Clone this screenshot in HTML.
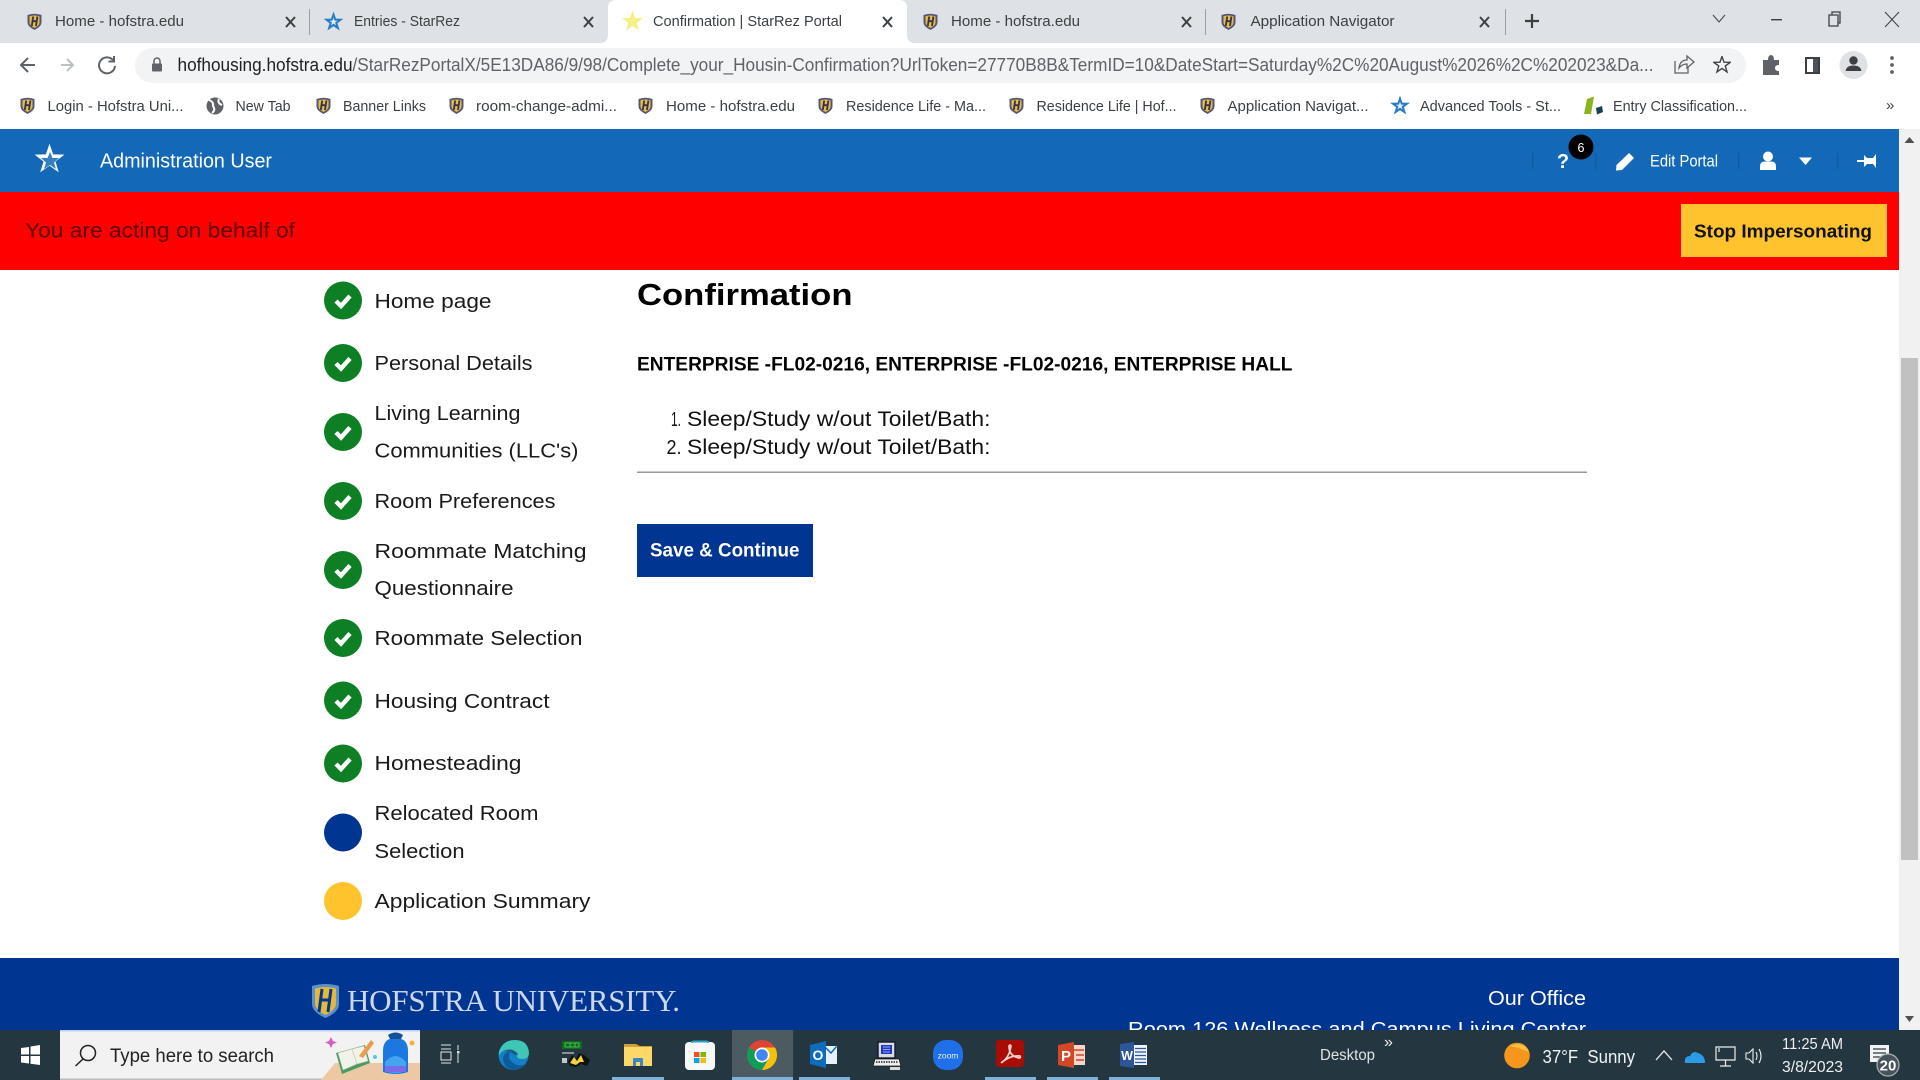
<!DOCTYPE html>
<html lang="en"><head><meta charset="utf-8"><title>Confirmation | StarRez Portal</title>
<style>
html,body{margin:0;padding:0;width:1920px;height:1080px;overflow:hidden;background:#fff}
svg{display:block;font-family:"Liberation Sans",Arial,sans-serif}
.t{font-size:15px;fill:#3c4043}
.b{font-size:14.5px;fill:#3c4043}
.n{font-size:20.5px;fill:#1a1a1a}
.ic{fill:none;stroke:#5f6368;stroke-width:2}
.x{fill:none;stroke:#3c4043;stroke-width:2}
.u{fill:#7fb2d8}
</style></head><body>
<svg width="1920" height="1080" viewBox="0 0 1920 1080" xmlns="http://www.w3.org/2000/svg">
<defs>
<symbol id="h" viewBox="0 0 15 17"><path d="M0.5 2 Q7.5 -0.6 14.5 2 V9.500 Q14.500 13.500 7.500 17 Q0.500 13.500 0.500 9.500Z" fill="#55557a"/><path d="M2.500 3.300 Q7.500 1.700 12.500 3.300 V9.500 Q12.500 12.500 7.500 15 Q2.500 12.500 2.500 9.500Z" fill="#e6bd3c"/><path d="M6.200 3.500 L4.800 13 M10.400 3.500 L9 13 M5.300 8.200 H9.800" stroke="#33305a" stroke-width="1.800" fill="none"/></symbol>
<symbol id="st" viewBox="-10.5 -10.5 21 21"><polygon points="0,-10 2.35,-3.24 9.51,-3.09 3.8,1.24 5.88,8.09 0,4 -5.88,8.09 -3.8,1.24 -9.51,-3.09 -2.35,-3.24"/></symbol>
<symbol id="st2" viewBox="-10.5 -10.5 21 21"><polygon points="0,-10 2.35,-3.24 9.51,-3.09 3.8,1.24 5.88,8.09 0,4 -5.88,8.09 -3.8,1.24 -9.51,-3.09 -2.35,-3.24" fill="#2b7cc0"/><polygon points="0,-4 1,-1.300 3.800,-1.200 1.500,0.500 2.400,3.200 0,1.600 -2.400,3.200 -1.500,0.500 -3.800,-1.200 -1,-1.300" fill="#dcecf8"/></symbol>
<symbol id="ck" viewBox="0 0 38 38"><circle cx="19" cy="19" r="19" fill="#0e7f25"/><path d="M12 19.500 L17 24.500 L26 14.500" fill="none" stroke="#fff" stroke-width="4.400"/></symbol>
</defs>

<!-- tab strip -->
<rect width="1920" height="43" fill="#dee1e6"/>
<path d="M600 43 Q608 43 608 35 V8 Q608 0 616 0 H899 Q907 0 907 8 V35 Q907 43 915 43Z" fill="#fff"/>
<rect y="43" width="1920" height="86" fill="#fff"/>
<use href="#h" x="27" y="13" width="15" height="17"/>
<text x="55" y="26" class="t" textLength="129" lengthAdjust="spacingAndGlyphs">Home - hofstra.edu</text>
<path class="x" d="M286 17 L295 27 M295 17 L286 27"/>
<rect x="309" y="9" width="1" height="26" fill="#9aa0a6"/>
<use href="#st2" x="322" y="11" width="23" height="22"/>
<text x="354" y="26" class="t" textLength="106" lengthAdjust="spacingAndGlyphs">Entries - StarRez</text>
<path class="x" d="M584 17 L593 27 M593 17 L584 27"/>
<use href="#st" x="621" y="10" width="23" height="23" fill="#f5ef85"/>
<text x="653" y="26" class="t" textLength="189" lengthAdjust="spacingAndGlyphs">Confirmation | StarRez Portal</text>
<path class="x" d="M883 17 L892 27 M892 17 L883 27"/>
<use href="#h" x="923" y="13" width="15" height="17"/>
<text x="951" y="26" class="t" textLength="129" lengthAdjust="spacingAndGlyphs">Home - hofstra.edu</text>
<path class="x" d="M1182 17 L1191 27 M1191 17 L1182 27"/>
<rect x="1205" y="9" width="1" height="26" fill="#9aa0a6"/>
<use href="#h" x="1221" y="13" width="15" height="17"/>
<text x="1250.500" y="26" class="t" textLength="144" lengthAdjust="spacingAndGlyphs">Application Navigator</text>
<path class="x" d="M1480 17 L1489 27 M1489 17 L1480 27"/>
<rect x="1505" y="9" width="1" height="26" fill="#9aa0a6"/>
<path d="M1532 14 V28 M1525 21 H1539" stroke="#3c4043" stroke-width="2.200" fill="none"/>
<path d="M1713 15 L1719 22 L1725 15" fill="none" stroke="#3c4043" stroke-width="1"/>
<rect x="1771" y="19" width="11" height="1.400" fill="#3c4043"/>
<path d="M1829 15 H1838 V26 H1829Z M1832 15 V12 H1840 V23 H1838" fill="none" stroke="#3c4043" stroke-width="1.300"/>
<path d="M1885 12 L1899 27 M1899 12 L1885 27" fill="none" stroke="#3c4043" stroke-width="1"/>

<!-- toolbar -->
<rect x="135" y="48" width="1611" height="35" rx="17.500" fill="#f1f3f4"/>
<path class="ic" d="M35 65 H21 M28 58 L21 65 L28 72"/>
<path d="M61 65 H73 M67 59 L73 65 L67 71" fill="none" stroke="#bcc0c4" stroke-width="2"/>
<path class="ic" d="M113 60 A8 8 0 1 0 115 66 M114 56 V61.500 H108.500"/>
<rect x="152" y="63.500" width="10" height="8" rx="1" fill="#5f6368"/><path d="M154 64 V61 A3 3 0 0 1 160 61 V64" fill="none" stroke="#5f6368" stroke-width="1.500"/>
<text x="177.500" y="71" font-size="18" fill="#5f6368" textLength="1476" lengthAdjust="spacingAndGlyphs"><tspan fill="#202124">hofhousing.hofstra.edu</tspan>/StarRezPortalX/5E13DA86/9/98/Complete_your_Housin-Confirmation?UrlToken=27770B8B&amp;TermID=10&amp;DateStart=Saturday%2C%20August%2026%2C%202023&amp;Da...</text>
<path d="M1675 61 V73 H1688 V67 M1679 68 Q1680 60 1687 60 V56 L1694 62 L1687 68 V64 Q1682 64 1679 68Z" fill="none" stroke="#5f6368" stroke-width="1.300"/>
<use href="#st" x="1713" y="56" width="18" height="18" fill="none" stroke="#3c4043" stroke-width="1.600"/>
<path d="M1763 60 H1768 Q1768 55 1771 55 Q1774 55 1774 60 H1779 V65 Q1775 65 1775 68 Q1775 71 1779 71 V75 H1763Z" fill="#5f6368"/>
<rect x="1806" y="58" width="13" height="15" fill="none" stroke="#3c4043" stroke-width="2"/><rect x="1813" y="58" width="6" height="15" fill="#3c4043" opacity=".9"/>
<circle cx="1853.500" cy="65" r="14" fill="#dfe1e5"/><circle cx="1853.500" cy="60.500" r="4.200" fill="#3c4043"/><path d="M1845.500 71 Q1846.500 65.500 1853.500 65.500 Q1860.500 65.500 1861.500 71Z" fill="#3c4043"/>
<circle cx="1892" cy="58" r="1.900" fill="#5f6368"/><circle cx="1892" cy="65" r="1.900" fill="#5f6368"/><circle cx="1892" cy="72" r="1.900" fill="#5f6368"/>

<!-- bookmarks -->
<use href="#h" x="20" y="97" width="15" height="17"/>
<text x="47.500" y="111" class="b" textLength="136" lengthAdjust="spacingAndGlyphs">Login - Hofstra Uni...</text>
<circle cx="215" cy="106" r="8.500" fill="#5f6368"/><path d="M209 100 Q214 102 213 106 Q216 110 212 113 M219 99 Q217 103 222 105" fill="none" stroke="#fff" stroke-width="2"/>
<text x="235.500" y="111" class="b" textLength="55" lengthAdjust="spacingAndGlyphs">New Tab</text>
<use href="#h" x="316" y="97" width="15" height="17"/>
<text x="343" y="111" class="b" textLength="83" lengthAdjust="spacingAndGlyphs">Banner Links</text>
<use href="#h" x="449" y="97" width="15" height="17"/>
<text x="476" y="111" class="b" textLength="141" lengthAdjust="spacingAndGlyphs">room-change-admi...</text>
<use href="#h" x="638" y="97" width="15" height="17"/>
<text x="666" y="111" class="b" textLength="129" lengthAdjust="spacingAndGlyphs">Home - hofstra.edu</text>
<use href="#h" x="818" y="97" width="15" height="17"/>
<text x="846" y="111" class="b" textLength="140" lengthAdjust="spacingAndGlyphs">Residence Life - Ma...</text>
<use href="#h" x="1009" y="97" width="15" height="17"/>
<text x="1036.500" y="111" class="b" textLength="140" lengthAdjust="spacingAndGlyphs">Residence Life | Hof...</text>
<use href="#h" x="1200" y="97" width="15" height="17"/>
<text x="1227.500" y="111" class="b" textLength="141" lengthAdjust="spacingAndGlyphs">Application Navigat...</text>
<use href="#st2" x="1389" y="95" width="22" height="22"/>
<text x="1420" y="111" class="b" textLength="141" lengthAdjust="spacingAndGlyphs">Advanced Tools - St...</text>
<path d="M1587 99 L1594 96.500 L1591 114 L1584 114Z" fill="#8ab41e"/><path d="M1596 108 L1602 106 L1603 112 L1597 114.500Z" fill="#17424f"/>
<text x="1613" y="111" class="b" textLength="134" lengthAdjust="spacingAndGlyphs">Entry Classification...</text>
<text x="1886" y="110" font-size="15" fill="#3c4043">»</text>

<!-- scrollbar -->
<rect x="1899" y="129" width="21" height="901" fill="#f1f1f1"/>
<path d="M1904.500 143 L1909.500 137 L1914.500 143Z" fill="#505050"/>
<rect x="1901" y="358" width="17" height="502" fill="#c1c1c1"/>
<path d="M1905 1016 L1909.500 1022 L1914 1016Z" fill="#505050"/>

<!-- portal header -->
<rect y="129" width="1899" height="63" fill="#1369b7"/>
<use href="#st" x="32" y="143" width="35" height="33" fill="#fff"/>
<polygon points="50,152 52.500,158 59,158 54,162.500 56,169 50,165 44,169 46,162.500 41,158 47.500,158" fill="#1369b7" opacity=".85"/>
<text x="100" y="167.500" font-size="20" fill="#fff" textLength="172" lengthAdjust="spacingAndGlyphs">Administration User</text>
<g fill="#0f5ba1"><rect x="1532" y="153" width="1.400" height="16"/><rect x="1595" y="153" width="1.400" height="16"/><rect x="1738" y="153" width="1.400" height="16"/><rect x="1837" y="153" width="1.400" height="16"/></g>
<text x="1563" y="168" font-size="20" font-weight="bold" fill="#fff" text-anchor="middle">?</text>
<circle cx="1581" cy="147" r="12.500" fill="#000"/>
<text x="1581" y="152" font-size="12.500" fill="#fff" text-anchor="middle">6</text>
<path d="M1629 153 L1634 158 L1622 170 L1616 170.500 L1616.500 165Z" fill="#fff"/>
<text x="1650" y="166.500" font-size="17" fill="#fff" textLength="68" lengthAdjust="spacingAndGlyphs">Edit Portal</text>
<circle cx="1768" cy="156.500" r="5" fill="#fff"/><path d="M1760 170 V166 Q1760 161.500 1765 161.500 H1771 Q1776 161.500 1776 166 V170Z" fill="#fff"/>
<path d="M1799 157.500 H1812 L1805.500 165Z" fill="#fff"/>
<rect x="1857" y="160" width="8" height="2" fill="#fff"/><path d="M1864 155 L1867 158 H1873 L1876 154 V168 L1873 164 H1867 L1864 167Z" fill="#fff"/>

<!-- red bar -->
<rect y="192" width="1899" height="78" fill="#f00"/>
<text x="25" y="237.500" font-size="21" fill="#5c0000" textLength="270" lengthAdjust="spacingAndGlyphs">You are acting on behalf of</text>
<rect x="1681" y="204" width="206" height="53" fill="#ffc32e"/>
<text x="1694" y="237.500" font-size="18" font-weight="bold" fill="#111" textLength="178" lengthAdjust="spacingAndGlyphs">Stop Impersonating</text>

<!-- sidebar -->
<use href="#ck" x="324" y="281.500" width="38" height="38"/>
<text x="374.500" y="308" class="n" textLength="117" lengthAdjust="spacingAndGlyphs">Home page</text>
<use href="#ck" x="324" y="344" width="38" height="38"/>
<text x="374.500" y="370" class="n" textLength="158" lengthAdjust="spacingAndGlyphs">Personal Details</text>
<use href="#ck" x="324" y="413" width="38" height="38"/>
<text x="374.500" y="420" class="n" textLength="146" lengthAdjust="spacingAndGlyphs">Living Learning</text>
<text x="374.500" y="457.500" class="n" textLength="204" lengthAdjust="spacingAndGlyphs">Communities (LLC's)</text>
<use href="#ck" x="324" y="482" width="38" height="38"/>
<text x="374.500" y="508" class="n" textLength="181" lengthAdjust="spacingAndGlyphs">Room Preferences</text>
<use href="#ck" x="324" y="551" width="38" height="38"/>
<text x="374.500" y="558" class="n" textLength="212" lengthAdjust="spacingAndGlyphs">Roommate Matching</text>
<text x="374.500" y="595" class="n" textLength="139" lengthAdjust="spacingAndGlyphs">Questionnaire</text>
<use href="#ck" x="324" y="619" width="38" height="38"/>
<text x="374.500" y="645" class="n" textLength="208" lengthAdjust="spacingAndGlyphs">Roommate Selection</text>
<use href="#ck" x="324" y="681.500" width="38" height="38"/>
<text x="374.500" y="708" class="n" textLength="175" lengthAdjust="spacingAndGlyphs">Housing Contract</text>
<use href="#ck" x="324" y="744.500" width="38" height="38"/>
<text x="374.500" y="770" class="n" textLength="147" lengthAdjust="spacingAndGlyphs">Homesteading</text>
<circle cx="343" cy="832.500" r="19" fill="#003591"/>
<text x="374.500" y="820" class="n" textLength="164" lengthAdjust="spacingAndGlyphs">Relocated Room</text>
<text x="374.500" y="858" class="n" textLength="90" lengthAdjust="spacingAndGlyphs">Selection</text>
<circle cx="343" cy="901" r="19" fill="#ffc32e"/>
<text x="374.500" y="908" class="n" textLength="216" lengthAdjust="spacingAndGlyphs">Application Summary</text>

<!-- main content -->
<text x="637" y="305" font-size="31" font-weight="bold" fill="#000" textLength="215.500" lengthAdjust="spacingAndGlyphs">Confirmation</text>
<text x="637" y="370.500" font-size="19" font-weight="bold" fill="#000" textLength="655.500" lengthAdjust="spacingAndGlyphs">ENTERPRISE -FL02-0216, ENTERPRISE -FL02-0216, ENTERPRISE HALL</text>
<text x="671" y="426" font-size="20.500" fill="#111" textLength="10" lengthAdjust="spacingAndGlyphs">1.</text>
<text x="687" y="426" font-size="21" fill="#111" textLength="303.500" lengthAdjust="spacingAndGlyphs">Sleep/Study w/out Toilet/Bath:</text>
<text x="666.500" y="454" font-size="20.500" fill="#111" textLength="15" lengthAdjust="spacingAndGlyphs">2.</text>
<text x="687" y="454" font-size="21" fill="#111" textLength="303.500" lengthAdjust="spacingAndGlyphs">Sleep/Study w/out Toilet/Bath:</text>
<rect x="637" y="471.500" width="950" height="1.500" fill="#999"/>
<rect x="637" y="524" width="176" height="53" fill="#003591"/>
<text x="650" y="556.500" font-size="19" font-weight="bold" fill="#fff" textLength="149.500" lengthAdjust="spacingAndGlyphs">Save &amp; Continue</text>

<!-- footer -->
<rect y="958" width="1899" height="72" fill="#003591"/>
<path d="M312 986 Q325.500 982 339 986 V1004 Q339 1012 325.500 1018 Q312 1012 312 1004Z" fill="#5e8fc9"/>
<path d="M315 988.500 Q325.500 985.500 336 988.500 V1003 Q336 1010 325.500 1015 Q315 1010 315 1003Z" fill="#e5b83a"/>
<path d="M322 989 L319 1012 M331 989 L328 1012 M320 1000 H330" stroke="#003591" stroke-width="3" fill="none"/>
<text x="347" y="1011" font-size="31" fill="#ccd8ea" style="font-family:'Liberation Serif',serif" textLength="333" lengthAdjust="spacing">HOFSTRA UNIVERSITY.</text>
<text x="1488" y="1005" font-size="20" fill="#fff" textLength="98" lengthAdjust="spacingAndGlyphs">Our Office</text>
<text x="1128" y="1036" font-size="20" fill="#fff" textLength="458" lengthAdjust="spacingAndGlyphs">Room 126 Wellness and Campus Living Center</text>

<!-- taskbar -->
<rect y="1030" width="1920" height="50" fill="#24363f"/>
<path d="M21 1048 L29 1047 V1054.500 H21Z M30.500 1046.500 L40 1045 V1054.500 H30.500Z M21 1056 H29 V1063.500 L21 1062.500Z M30.500 1056 H40 V1065 L30.500 1063.700Z" fill="#fff"/>
<rect x="60" y="1030" width="360" height="50" fill="#f2f2f2"/><rect x="60" y="1030" width="360" height="1.500" fill="#b9d2ee"/><rect x="60" y="1078.500" width="360" height="1.500" fill="#b9bcbe"/>
<circle cx="88" cy="1053" r="7.500" fill="none" stroke="#222" stroke-width="1.500"/><path d="M83 1059 L75.500 1066" stroke="#222" stroke-width="1.500"/>
<text x="110" y="1062" font-size="19" fill="#222" textLength="164" lengthAdjust="spacingAndGlyphs">Type here to search</text>
<!-- search illustration -->
<path d="M321 1080 L335 1063 H420 V1080Z" fill="#ecc9a4"/>
<path d="M336 1053 L365 1045 L370 1063 L342 1074Z" fill="#4d9a62"/>
<path d="M338 1053 L352 1049 L357 1064 L343 1070Z M352 1049 L364 1046 L368 1061 L357 1064Z" fill="#f1f2ea" stroke="#b9c4a0" stroke-width=".6"/>
<path d="M371 1040 L374 1043 L363 1058 L359 1056Z" fill="#ef9a4c"/>
<path d="M331 1037 L333 1041 L337 1042.500 L333 1044 L331 1048 L329 1044 L325 1042.500 L329 1041Z" fill="#d65fc4"/>
<circle cx="375" cy="1057" r="2" fill="#57c8dc"/>
<path d="M383 1072 V1051 Q383 1038 395.500 1038 Q408 1038 408 1051 V1072 Q395.500 1076 383 1072Z" fill="#1a78e0"/>
<path d="M388 1035 Q395.500 1030 403 1035 L401 1039 H390Z" fill="#16509c"/>
<path d="M385 1071 V1062 Q395.500 1050 406 1062 V1071 Q395.500 1075 385 1071Z" fill="#45a4f0"/><rect x="385" y="1066" width="21" height="6" fill="#7a6ce8"/>
<circle cx="412" cy="1043" r="2.500" fill="#f2b23a"/>
<!-- task view -->
<path d="M441 1045 H451 M441 1049 H451 M441 1052 H451 V1060 H441Z M441 1063 H451 M458 1045 V1050 M458 1054 V1063" fill="none" stroke="#e5e8ea" stroke-width="1"/><rect x="457" y="1051" width="2.500" height="2.500" fill="#e5e8ea"/>
<!-- edge -->
<circle cx="513.500" cy="1055" r="15" fill="#1480c8"/>
<path d="M499 1052 Q503 1040 515 1040 Q528 1040 529 1053 Q529 1059 522 1059 Q515 1059 518 1054 Q513 1048 505 1050 Q500 1052 499 1056Z" fill="#3fc6b4"/>
<path d="M513 1070 Q503 1068 503 1057 Q505 1052 510 1052 Q506 1060 517 1065 Q522 1066 526 1064 Q521 1070 513 1070Z" fill="#0e5a9a"/>
<path d="M505 1051 Q512 1047 518 1054 Q514 1056 511 1052Z" fill="#24363f" opacity=".55"/>
<!-- gold app icon -->
<rect x="562" y="1041" width="20" height="8" fill="#0f6b1c"/><path d="M565 1043 H579 V1047 H565Z M570 1043 V1047 M575 1043 V1047" stroke="#5fcf5c" stroke-width=".8" fill="none"/>
<rect x="562" y="1052" width="12" height="2" fill="#8b9296"/><rect x="562" y="1058" width="5" height="5" fill="#c3c7ca"/>
<path d="M568 1062 L572 1055 L576 1059 L579 1053 L584 1055 L590 1060 L587 1066 L581 1064 L576 1067 L570 1066Z" fill="#111"/>
<path d="M570 1063 L574 1057 L577 1061 L581 1055 L584 1062 L580 1062 L576 1065Z" fill="#f0d63c"/>
<!-- explorer -->
<path d="M624 1044 H636 L640 1046 H652 V1066 H624Z" fill="#c9a23a"/><rect x="624" y="1047" width="28" height="19" fill="#fbd868"/><path d="M633 1066 V1059 Q633 1058 634 1058 H642 Q643 1058 643 1059 V1066 H640 V1062 H636 V1066Z" fill="#3e85c4"/>
<!-- store -->
<rect x="685" y="1042" width="30" height="28" rx="4" fill="#f6f8f9"/><path d="M692 1043 V1041 Q692 1041.500 693 1041.500 H707 Q708 1041.500 708 1041 V1043 M693 1041 L695 1042 M707 1041 L705 1042" fill="none" stroke="#2da5c9" stroke-width="2"/>
<rect x="694" y="1052" width="5.500" height="5" fill="#f25022"/><rect x="700.500" y="1052" width="5.500" height="5" fill="#7fba00"/><rect x="694" y="1058" width="5.500" height="5" fill="#00a4ef"/><rect x="700.500" y="1058" width="5.500" height="5" fill="#ffb900"/>
<!-- chrome -->
<rect x="732" y="1030" width="61" height="50" fill="#4c5a62"/>
<circle cx="762" cy="1055" r="15" fill="#db4437"/>
<path d="M749 1047.500 A15 15 0 0 0 762 1070 L769.500 1057 L762 1055 Z" fill="#0f9d58"/>
<path d="M762 1070 A15 15 0 0 0 775 1047.500 L762 1047.500 L768.500 1059Z" fill="#f4c20d"/>
<circle cx="762" cy="1055" r="7.500" fill="#fff"/><circle cx="762" cy="1055" r="5.800" fill="#4285f4"/>
<!-- outlook -->
<rect x="824" y="1046" width="13" height="18" fill="#e6f1fa"/><path d="M824.500 1046.500 L831 1053 L836.500 1046.500" fill="none" stroke="#0f6cbd" stroke-width="1.500"/>
<path d="M810 1045 L826 1041 V1068 L810 1064Z" fill="#0f6cbd"/>
<text x="818" y="1060" font-size="14" font-weight="bold" fill="#fff" text-anchor="middle">O</text>
<!-- old pc -->
<rect x="878" y="1042" width="17" height="16" fill="#d9dde0" stroke="#101a2e" stroke-width="1.400"/><rect x="881" y="1045" width="11" height="9" fill="#2336c4"/><path d="M883 1047 H890 M883 1049.500 H890 M883 1052 H890" stroke="#bcd0ff" stroke-width=".8"/>
<path d="M875 1059 H899 L901 1066 H873Z" fill="#eceded" stroke="#1a1a1a" stroke-width=".8"/><path d="M876 1062 H898" stroke="#555" stroke-width="2" stroke-dasharray="1.500 1"/>
<rect x="890" y="1067" width="10" height="3" fill="#d9d9d9"/>
<!-- zoom -->
<rect x="933" y="1040" width="30" height="30" rx="13" fill="#1f6fe8"/><text x="948" y="1058.500" font-size="8.500" fill="#e8f0ff" text-anchor="middle">zoom</text>
<!-- acrobat -->
<rect x="996" y="1040" width="28" height="27" rx="3" fill="#a80c02"/><path d="M1002 1062 Q1009 1058 1011 1046 Q1010 1044 1009 1046 Q1009 1056 1019 1058 Q1021 1058 1020 1056 Q1010 1055 1001 1063" fill="none" stroke="#f4d2cf" stroke-width="1.700"/>
<!-- powerpoint -->
<rect x="1070" y="1045" width="15" height="20" fill="#f5d6cb"/><path d="M1074 1050 H1084 M1076 1055 H1084 M1076 1060 H1084" stroke="#d24726" stroke-width="1.500"/>
<path d="M1058 1045 L1074 1042 V1068 L1058 1065Z" fill="#d24726"/><text x="1066" y="1061" font-size="15" font-weight="bold" fill="#fff" text-anchor="middle">P</text>
<!-- word -->
<rect x="1132" y="1045" width="15" height="20" fill="#f0f4fa"/><path d="M1135 1048.500 H1146 M1135 1052 H1146 M1135 1055.500 H1146 M1135 1059 H1146 M1135 1062.500 H1146" stroke="#2b579a" stroke-width="1.300"/>
<path d="M1120 1044 L1134 1042 V1068 L1120 1066Z" fill="#2b579a"/><text x="1127" y="1060" font-size="12.500" font-weight="bold" fill="#fff" text-anchor="middle">W</text>
<!-- running indicators -->
<rect class="u" x="612" y="1077" width="52" height="3"/><rect class="u" x="732" y="1077" width="61" height="3"/><rect class="u" x="799" y="1077" width="51" height="3"/><rect class="u" x="985" y="1077" width="51" height="3"/><rect class="u" x="1047" y="1077" width="51" height="3"/><rect class="u" x="1109" y="1077" width="51" height="3"/>
<text x="1320" y="1060" font-size="15.500" fill="#dfe3e5" textLength="55" lengthAdjust="spacingAndGlyphs">Desktop</text>
<text x="1384" y="1047" font-size="16" fill="#eee">»</text>
<circle cx="1517" cy="1055.500" r="12.800" fill="#f5971d"/><path d="M1510 1046 A13 13 0 0 1 1529 1052 Q1520 1048 1510 1046Z" fill="#fac043"/>
<text x="1542.500" y="1063" font-size="18" fill="#f0f2f3" textLength="92.500" xml:space="preserve" lengthAdjust="spacingAndGlyphs">37°F  Sunny</text>
<path d="M1656 1060 L1664 1051 L1672 1060" fill="none" stroke="#eee" stroke-width="1.300"/>
<path d="M1685 1063 Q1684 1056 1690 1056 Q1693 1050 1698 1053 Q1705 1055 1705 1063Z" fill="#2a9be4"/>
<path d="M1716 1047 H1735 V1060 H1716Z M1725.500 1060 V1066 M1720 1066 H1731 M1719 1048 V1052" fill="none" stroke="#eee" stroke-width="1.200"/>
<path d="M1746 1053 H1749 L1753 1049 V1063 L1749 1059 H1746Z M1756 1052 Q1758 1056 1756 1060 M1759 1049 Q1763 1056 1759 1063" fill="none" stroke="#eee" stroke-width="1.100"/>
<text x="1782" y="1049" font-size="15.500" fill="#eef0f1" textLength="61" lengthAdjust="spacingAndGlyphs">11:25 AM</text>
<text x="1782" y="1072" font-size="15.500" fill="#eef0f1" textLength="61" lengthAdjust="spacingAndGlyphs">3/8/2023</text>
<rect x="1870" y="1045" width="19" height="17" fill="#f3f3f3"/><path d="M1873 1049 H1886 M1873 1053 H1886 M1873 1057 H1882" stroke="#293a42" stroke-width="1.300"/>
<circle cx="1888" cy="1065" r="11" fill="#46535a" stroke="#a9b0b4" stroke-width="1.200"/>
<text x="1888" y="1070.500" font-size="15" font-weight="bold" fill="#fff" text-anchor="middle">20</text>
</svg>
</body></html>
